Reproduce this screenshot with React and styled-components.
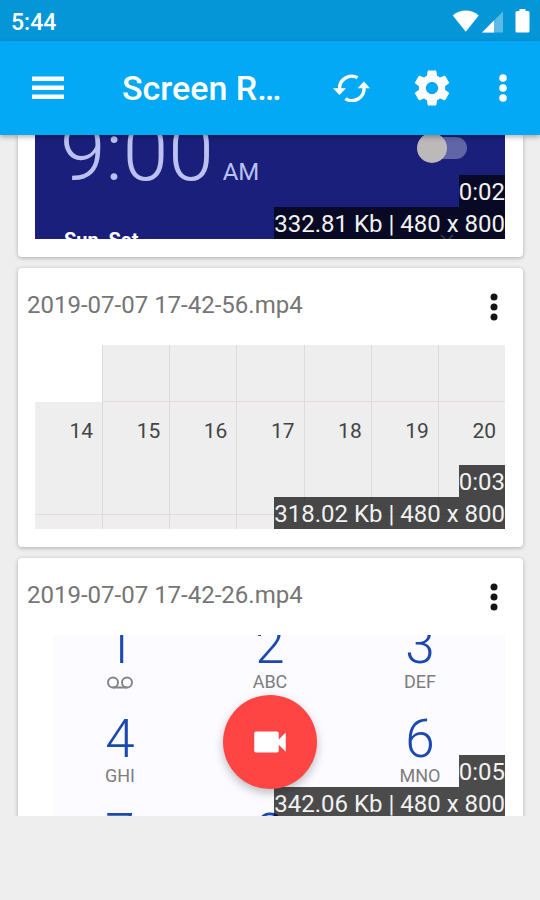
import React from "react";
import styled, { createGlobalStyle, css } from "styled-components";

const GlobalStyle = createGlobalStyle`
  * {
    box-sizing: border-box;
  }

  body {
    margin: 0;
    background-color: #eeeeee;
    font-family: Roboto, "Liberation Sans", sans-serif;
  }

  button {
    padding: 0;
    border: none;
    background: none;
    color: inherit;
    font: inherit;
    cursor: pointer;
  }
`;

const Screen = styled.div`
  display: flex;
  flex-direction: column;
  height: 100vh;
`;

const StatusBar = styled.div`
  display: flex;
  align-items: center;
  justify-content: space-between;
  flex-shrink: 0;
  height: 41px;
  padding: 0 10px 0 11px;
  background-color: #0596d7;
  color: #fff;
`;

const StatusTime = styled.span`
  padding-top: 3px;
  font-size: 23px;
  font-weight: 500;
`;

const StatusIcons = styled.svg`
  display: block;
  width: 78px;
  height: 24px;
`;

const Toolbar = styled.header`
  position: relative;
  z-index: 2;
  display: flex;
  align-items: center;
  flex-shrink: 0;
  height: 94px;
  padding-right: 6px;
  background-color: #03a9f4;
  color: #fff;
  box-shadow: 0 2px 5px rgba(0, 0, 0, 0.3);
`;

const ToolbarButton = styled.button`
  display: flex;
  align-items: center;
  justify-content: center;
  flex-shrink: 0;
  width: ${({ $width }) => $width}px;
  height: 80px;
`;

const ToolbarTitle = styled.h1`
  flex: 1;
  margin: 0;
  padding-left: 26px;
  font-size: 34px;
  font-weight: 500;
  line-height: 40px;
  white-space: nowrap;
`;

const Content = styled.main`
  position: relative;
  flex: 1;
  min-height: 0;
  overflow: hidden;
`;

const CardList = styled.div`
  display: flex;
  flex-direction: column;
  gap: 11px;
  padding: 0 17px 0 18px;
`;

const Card = styled.article`
  padding-bottom: 18px;
  border-radius: ${({ $cut }) => ($cut ? "0 0 4px 4px" : "4px")};
  background-color: #fff;
  box-shadow: 0 1px 4px rgba(0, 0, 0, 0.28);
`;

const CardHeader = styled.div`
  display: flex;
  align-items: center;
  justify-content: space-between;
  height: 77px;
  padding: 0 9px;
`;

const FileName = styled.h2`
  margin: 0;
  padding-bottom: 4px;
  color: #757575;
  font-size: 24px;
  font-weight: 400;
  line-height: 28px;
`;

const MoreButton = styled.button`
  display: flex;
  align-items: center;
  justify-content: center;
  width: 40px;
  height: 48px;
  color: #151515;
`;

const Thumbnail = styled.div`
  position: relative;
  display: flex;
  flex-direction: column;
  height: ${({ $height }) => $height || 184}px;
  margin: 0 18px 0 17px;
  overflow: hidden;
`;

const Badges = styled.div`
  position: absolute;
  right: 0;
  bottom: 0;
  display: flex;
  flex-direction: column;
  align-items: flex-end;
`;

const Badge = styled.span`
  padding-top: 2px;
  background-color: rgba(0, 0, 0, 0.7);
  color: #f1f1f1;
  font-size: 24px;
  line-height: 30px;
`;

const Fab = styled.div`
  position: absolute;
  right: 0;
  bottom: 27px;
  left: 0;
  display: flex;
  justify-content: center;
  pointer-events: none;
`;

const FabButton = styled.button`
  display: flex;
  align-items: center;
  justify-content: center;
  width: 94px;
  height: 94px;
  border-radius: 50%;
  background-color: #ff4444;
  color: #fff;
  box-shadow: 0 4px 10px rgba(0, 0, 0, 0.25);
  pointer-events: auto;
`;

const BottomBar = styled.footer`
  flex-shrink: 0;
  height: 84px;
  background-color: #eeeeee;
`;

/* alarm clock preview */

const Clock = styled.div`
  display: flex;
  flex-direction: column;
  justify-content: flex-end;
  height: 100%;
  padding: 0 38px 0 25px;
  background-color: #1a1f7c;
  color: #bcc1ef;
`;

const ClockRow = styled.div`
  display: flex;
  align-items: flex-end;
  justify-content: space-between;
`;

const ClockTime = styled.div`
  display: flex;
  align-items: baseline;
  gap: 9px;
  font-size: 82px;
  font-weight: 300;
  line-height: 76px;
  white-space: nowrap;

  small {
    font-size: 24px;
    font-weight: 400;
  }
`;

const ClockSwitch = styled.input`
  position: relative;
  width: 46px;
  height: 22px;
  margin: 0 0 51px;
  border-radius: 11px;
  appearance: none;
  background-color: #6065a8;

  &::before {
    position: absolute;
    top: -4px;
    left: -4px;
    width: 30px;
    height: 30px;
    border-radius: 50%;
    background-color: #bdb9bb;
    content: "";
  }
`;

const ClockDays = styled.div`
  height: 13px;
  margin-top: 16px;
  padding-left: 4px;
  color: #fff;
  font-size: 20px;
  font-weight: 700;
  line-height: 28px;
`;

const Chevron = styled.svg`
  position: absolute;
  right: 50px;
  bottom: 0;
`;

/* calendar preview */

const Calendar = styled.div`
  display: grid;
  grid-template-columns: repeat(7, 1fr);
  grid-template-rows: 57px 113px 14px;
  color: #444;
`;

const Day = styled.div`
  padding: 17px 9px 0 0;
  border-bottom: 1px solid #e2dadb;
  border-left: 1px solid #dfdada;
  background-color: #eeeeee;
  font-size: 21px;
  line-height: 24px;
  text-align: right;

  &:nth-child(7n + 1) {
    border-left-color: #eeeeee;
  }

  &:nth-child(n + 15) {
    border-bottom: none;
  }

  ${({ $blank }) =>
    $blank &&
    css`
      && {
        border-color: #fff;
      }
      background-color: #fff;
    `}
`;

/* dial pad preview, scrolled a little past its first row */

const DialPad = styled.div`
  display: grid;
  grid-template-columns: repeat(3, 1fr);
  grid-auto-rows: 94px;
  margin-top: -16px;
  padding: 0 10px;
  background: linear-gradient(90deg, #fff 18px, #fcfbff 18px);
`;

const Key = styled.div`
  display: flex;
  flex-direction: column;
  align-items: center;
  color: #1b49ae;
  font-size: 53px;
  font-weight: 300;
  line-height: 52px;

  small {
    color: #7d7d7d;
    font-size: 18px;
    font-weight: 400;
    line-height: 22px;
  }
`;

const Voicemail = styled.svg`
  margin-top: 5px;
`;

const keys = [
  { digit: "1", voicemail: true },
  { digit: "2", letters: "ABC" },
  { digit: "3", letters: "DEF" },
  { digit: "4", letters: "GHI" },
  {},
  { digit: "6", letters: "MNO" },
  { digit: "7" },
  { digit: "8" },
];

const week = [14, 15, 16, 17, 18, 19, 20];

const DotsIcon = ({ radius }) => (
  <svg width="10" height="30" viewBox="0 0 10 30" fill="currentColor">
    <circle cx="5" cy="5" r={radius} />
    <circle cx="5" cy="15" r={radius} />
    <circle cx="5" cy="25" r={radius} />
  </svg>
);

const MenuIcon = () => (
  <svg width="32" height="24" viewBox="0 0 32 24" fill="currentColor">
    <path d="M0 .5h32v4.600H0zM0 9.500h32v4.600H0zM0 18.500h32v4.600H0z" />
  </svg>
);

const SyncIcon = () => (
  <svg width="37" height="28" viewBox="0 0 37 28" fill="currentColor">
    <path
      d="M6.700 15.500A12 12 0 0 1 24.500 3.800M30.900 13A12 12 0 0 1 12.400 24.600"
      fill="none"
      stroke="currentColor"
      strokeWidth="3.400"
    />
    <path d="M0 14.300h13L6.500 21zM24.600 14.300h12.400L30.900 7.600z" />
  </svg>
);

const SettingsIcon = () => (
  <svg width="42" height="42" viewBox="0 0 24 24" fill="currentColor">
    <path d="M19.430 12.980c.04-.32.07-.64.07-.98s-.03-.66-.07-.98l2.110-1.650c.19-.15.24-.42.12-.64l-2-3.460c-.12-.22-.39-.3-.61-.22l-2.490 1c-.52-.4-1.080-.73-1.690-.98l-.38-2.650C14.460 2.180 14.250 2 14 2h-4c-.25 0-.46.18-.49.42l-.38 2.650c-.61.25-1.170.59-1.690.98l-2.490-1c-.23-.09-.49 0-.61.22l-2 3.460c-.13.22-.07.49.12.64l2.110 1.650c-.04.32-.07.65-.07.98s.03.66.07.98l-2.110 1.650c-.19.15-.24.42-.12.64l2 3.460c.12.22.39.3.61.22l2.490-1c.52.4 1.080.73 1.690.98l.38 2.650c.03.24.24.42.49.42h4c.25 0 .46-.18.49-.42l.38-2.650c.61-.25 1.170-.59 1.690-.98l2.490 1c.23.09.49 0 .61-.22l2-3.460c.12-.22.07-.49-.12-.64l-2.110-1.650zM12 15.500c-1.930 0-3.500-1.570-3.500-3.500s1.570-3.500 3.500-3.500 3.500 1.570 3.500 3.500-1.570 3.500-3.500 3.500z" />
  </svg>
);

const VideoIcon = () => (
  <svg width="42" height="42" viewBox="0 0 24 24" fill="currentColor">
    <path d="M17 10.500V7c0-.55-.45-1-1-1H4c-.55 0-1 .45-1 1v10c0 .55.45 1 1 1h12c.55 0 1-.45 1-1v-3.500l4 4v-11l-4 4z" />
  </svg>
);

const ClockPreview = () => (
  <Clock>
    <ClockRow>
      <ClockTime>
        9:00
        <small>AM</small>
      </ClockTime>
      <ClockSwitch type="checkbox" aria-label="Alarm" />
    </ClockRow>
    <ClockDays>Sun, Sat</ClockDays>
    <Chevron width="16" height="5" viewBox="0 0 16 5">
      <path d="M2 1l6 6 6-6" fill="none" stroke="#9ca0cf" strokeWidth="2" />
    </Chevron>
  </Clock>
);

const CalendarPreview = () => (
  <Calendar>
    {week.map((day, i) => (
      <Day key={`before-${day}`} $blank={i === 0} />
    ))}
    {week.map((day) => (
      <Day key={day}>{day}</Day>
    ))}
    {week.map((day) => (
      <Day key={`after-${day}`} />
    ))}
  </Calendar>
);

const DialPadPreview = () => (
  <DialPad>
    {keys.map(({ digit, letters, voicemail }, i) => (
      <Key key={i}>
        {digit}
        {letters && <small>{letters}</small>}
        {voicemail && (
          <Voicemail width="28" height="13" viewBox="0 0 28 13">
            <g fill="none" stroke="#858585" strokeWidth="2">
              <circle cx="7" cy="6.500" r="5" />
              <circle cx="21" cy="6.500" r="5" />
              <path d="M7 11.500h14" />
            </g>
          </Voicemail>
        )}
      </Key>
    ))}
  </DialPad>
);

const VideoCard = ({ name, duration, info, height, children }) => (
  <Card $cut={!name}>
    {name && (
      <CardHeader>
        <FileName>{name}</FileName>
        <MoreButton aria-label="Video options">
          <DotsIcon radius={3.5} />
        </MoreButton>
      </CardHeader>
    )}
    <Thumbnail $height={height}>
      {children}
      <Badges>
        <Badge>{duration}</Badge>
        <Badge>{info}</Badge>
      </Badges>
    </Thumbnail>
  </Card>
);

const App = () => (
  <Screen>
    <GlobalStyle />
    <StatusBar>
      <StatusTime>5:44</StatusTime>
      <StatusIcons viewBox="0 0 78 24" fill="#fff">
        <path d="M.8 6.500C8-.2 19.500-.2 26.700 6.500L13.800 22.800z" />
        <path d="M51 2.500v21H30z" opacity="0.35" />
        <path d="M42 11.500v12H30z" />
        <path d="M67.500 0h6v2h2.500q1.500 0 1.500 1.500v18.500q0 1.500-1.500 1.500h-11q-1.500 0-1.500-1.500v-18.500q0-1.500 1.500-1.500h2.500z" />
      </StatusIcons>
    </StatusBar>
    <Toolbar>
      <ToolbarButton $width={96} aria-label="Menu">
        <MenuIcon />
      </ToolbarButton>
      <ToolbarTitle>Screen R…</ToolbarTitle>
      <ToolbarButton $width={82} aria-label="Refresh">
        <SyncIcon />
      </ToolbarButton>
      <ToolbarButton $width={80} aria-label="Settings">
        <SettingsIcon />
      </ToolbarButton>
      <ToolbarButton $width={62} aria-label="More options">
        <DotsIcon radius={3.8} />
      </ToolbarButton>
    </Toolbar>
    <Content>
      <CardList>
        <VideoCard duration="0:02" info="332.81 Kb | 480 x 800" height={104}>
          <ClockPreview />
        </VideoCard>
        <VideoCard
          name="2019-07-07 17-42-56.mp4"
          duration="0:03"
          info="318.02 Kb | 480 x 800"
        >
          <CalendarPreview />
        </VideoCard>
        <VideoCard
          name="2019-07-07 17-42-26.mp4"
          duration="0:05"
          info="342.06 Kb | 480 x 800"
        >
          <DialPadPreview />
        </VideoCard>
      </CardList>
      <Fab>
        <FabButton aria-label="Record">
          <VideoIcon />
        </FabButton>
      </Fab>
    </Content>
    <BottomBar />
  </Screen>
);

export default App;
